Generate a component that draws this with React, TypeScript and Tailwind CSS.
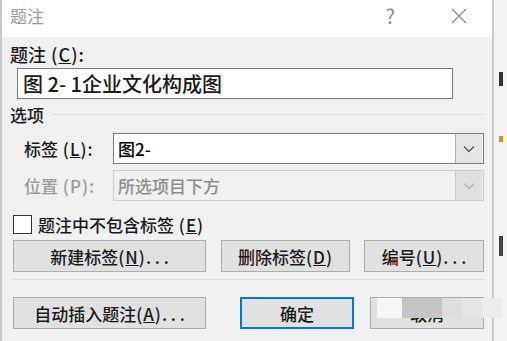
import React from "react";

const F = { fontFamily: '"Noto Sans CJK SC", "Noto Sans", sans-serif' };

function Chevron({ color }: { color: string }) {
  return (
    <svg width="12" height="8" viewBox="0 0 12 8">
      <path d="M1 1.5 L6 6.5 L11 1.5" fill="none" stroke={color} strokeWidth="1.3" />
    </svg>
  );
}

function Btn({ children, className = "" }: { children: React.ReactNode; className?: string }) {
  return (
    <div
      className={`h-[32px] flex items-center justify-center bg-[#e1e1e1] border border-[#adadad] text-[17px] text-[#1a1a1a] font-medium leading-none ${className}`}
    >
      {children}
    </div>
  );
}

function P({ c }: { c: string }) {
  return (
    <span className="tracking-[1px]">
      {" "}(<span className="underline">{c}</span>)
    </span>
  );
}

export default function App() {
  return (
    <div className="w-[507px] h-[341px] flex bg-[#e9e9e9] overflow-hidden" style={F}>
      <div className="w-[494px] h-full flex flex-col border-l-2 border-r-2 border-[#c8c8c8] bg-[#f0f0f0] relative">
        {/* title bar */}
        <div className="h-[37px] bg-white flex items-center shrink-0">
          <div className="pl-[8px] text-[17px] text-[#9a9a9a] leading-none -mt-[6px]">题注</div>
          <div className="flex-1" />
          <div className="text-[20px] text-[#8a8a8a] leading-none mr-[56px] -mt-[6px]">?</div>
          <svg width="16" height="16" viewBox="0 0 16 16" className="mr-[25px] -mt-[6px]">
            <path d="M1 1 L15 15 M15 1 L1 15" stroke="#8a8a8a" strokeWidth="1.3" />
          </svg>
        </div>
        {/* body */}
        <div className="flex flex-col pl-[8px] pr-[8px]">
          <div className="mt-[6px] h-[22px] text-[18px] leading-[22px] text-[#1a1a1a] font-medium">
            题注<P c="C" />:
          </div>
          <div className="mt-[3px] ml-[7px] w-[436px] h-[31px] bg-white border border-[#7a7a7a] flex items-center pl-[5px] text-[20px] text-[#1a1a1a] font-medium">
            图 2- 1企业文化构成图
          </div>
          <div className="mt-[4px] flex items-center h-[22px]">
            <div className="text-[17px] leading-none text-[#1a1a1a] font-medium">选项</div>
            <div className="ml-[8px] flex-1 h-px bg-[#dcdcdc] mr-[1px]" />
          </div>
          <div className="mt-[8px] flex items-center h-[31px]">
            <div className="w-[103px] pl-[14px] text-[17px] text-[#1a1a1a] leading-none font-medium">
              标签<P c="L" />:
            </div>
            <div className="w-[371px] h-[31px] bg-white border border-[#7a7a7a] flex items-center">
              <div className="flex-1 pl-[4px] text-[17px] text-black leading-none font-medium">图2-</div>
              <div className="w-[27px] h-[29px] bg-[#e5e5e5] border-l border-[#adadad] flex items-center justify-center mr-px">
                <Chevron color="#555" />
              </div>
            </div>
          </div>
          <div className="mt-[6px] flex items-center h-[31px]">
            <div className="w-[103px] pl-[14px] text-[17px] text-[#9a9a9a] leading-none font-medium">
              位置<span className="tracking-[1px]"> (P)</span>:
            </div>
            <div className="w-[371px] h-[31px] bg-[#f0f0f0] border border-[#cccccc] flex items-center">
              <div className="flex-1 pl-[4px] text-[17px] text-[#8d8d8d] leading-none font-medium">所选项目下方</div>
              <div className="w-[27px] h-[29px] bg-[#e0e0e0] border-l border-[#cccccc] flex items-center justify-center mr-px">
                <Chevron color="#b5b5b5" />
              </div>
            </div>
          </div>
          <div className="mt-[13px] flex items-center h-[20px]">
            <div className="w-[19px] h-[19px] bg-white border border-[#333] ml-[3px]" />
            <div className="ml-[6px] text-[17px] text-[#1a1a1a] leading-none font-medium">
              题注中不包含标签<P c="E" />
            </div>
          </div>
          <div className="mt-[6px] flex h-[32px] pl-[3px]">
            <Btn className="w-[193px]">
              新建标签<P c="N" />. . .
            </Btn>
            <Btn className="w-[129px] ml-[15px]">
              删除标签<P c="D" />
            </Btn>
            <Btn className="w-[120px] ml-[14px]">
              编号<P c="U" />. . .
            </Btn>
          </div>
          <div className="mt-[7px] ml-[3px] w-[472px] h-px bg-[#dcdcdc]" />
          <div className="mt-[17px] flex h-[32px] pl-[3px]">
            <Btn className="w-[193px]">
              自动插入题注<P c="A" />. . .
            </Btn>
            <div className="ml-[34px] w-[114px] h-[32px] flex items-center justify-center bg-[#e1e1e1] border-2 border-[#0078d7] text-[17px] text-[#1a1a1a] leading-none font-medium">
              确定
            </div>
            <Btn className="w-[114px] ml-[16px]">取消</Btn>
          </div>
        </div>
        {/* watermark overlay */}
        <div className="absolute left-[375px] top-[298px] w-[125px] h-[20px] flex">
          <div className="w-[25px] h-full bg-[#f6f6f6]" />
          <div className="w-[40px] h-full bg-[#c4c4c4]" />
          <div className="w-[20px] h-full bg-[#dedede]" />
          <div className="w-[20px] h-full bg-[#e6e6e6]" />
          <div className="w-[20px] h-full bg-[#ececec]" />
        </div>
      </div>
      <div className="flex-1 h-full bg-[#f4f4f4] flex flex-col items-center">
        <div className="mt-[72px] w-[4px] h-[14px] bg-[#333]" />
        <div className="mt-[50px] w-[4px] h-[6px] bg-[#cc9900]" />
        <div className="mt-[94px] w-[4px] h-[20px] bg-[#444]" />
      </div>
    </div>
  );
}
